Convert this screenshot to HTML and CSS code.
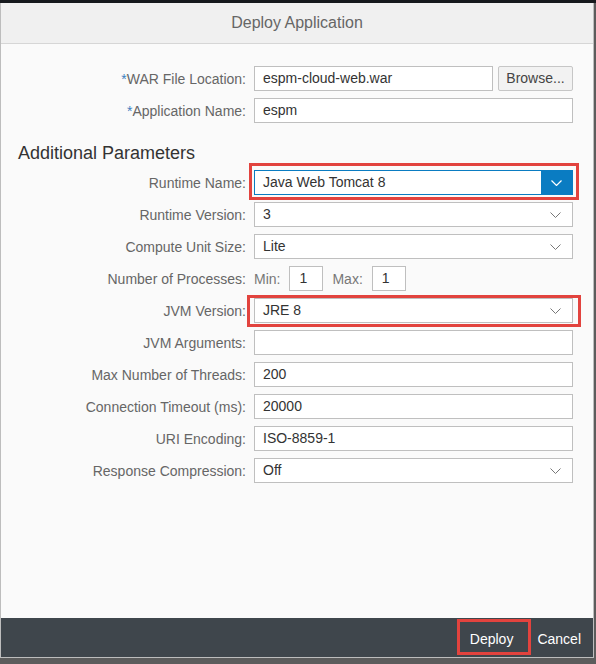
FILE: index.html
```html
<!DOCTYPE html>
<html>
<head>
<meta charset="utf-8">
<link rel="stylesheet" href="styles.css">
</head>
<body>
<div class="topbar"></div>
<div class="dialog">
  <div class="header">Deploy Application</div>
  <div class="content">
    <div class="form form-top">
      <label class="lbl"><span class="req">*</span>WAR File Location:</label>
      <div class="field-file">
        <div class="input">espm-cloud-web.war</div>
        <div class="browse">Browse...</div>
      </div>
      <label class="lbl"><span class="req">*</span>Application Name:</label>
      <div class="input">espm</div>
    </div>
    <h2 class="section">Additional Parameters</h2>
    <div class="form">
      <label class="lbl">Runtime Name:</label>
      <div class="select select-active hl-wrap">
        <span class="val">Java Web Tomcat 8</span>
        <span class="arrow-btn"><svg width="11" height="6" viewBox="0 0 11 6"><polyline points="0.5,0.5 5.5,5.5 10.5,0.5" fill="none" stroke="#fff" stroke-width="1.2"/></svg></span>
        <span class="hl hl-runtime"></span>
      </div>
      <label class="lbl">Runtime Version:</label>
      <div class="select"><span class="val">3</span><svg class="chev" width="11" height="6" viewBox="0 0 11 6"><polyline points="0.5,0.5 5.5,5.5 10.5,0.5" fill="none" stroke="#777" stroke-width="1"/></svg></div>
      <label class="lbl">Compute Unit Size:</label>
      <div class="select"><span class="val">Lite</span><svg class="chev" width="11" height="6" viewBox="0 0 11 6"><polyline points="0.5,0.5 5.5,5.5 10.5,0.5" fill="none" stroke="#777" stroke-width="1"/></svg></div>
      <label class="lbl">Number of Processes:</label>
      <div class="minmax">
        <span class="mm-lbl">Min:</span>
        <div class="input small">1</div>
        <span class="mm-lbl mm-max">Max:</span>
        <div class="input small">1</div>
      </div>
      <label class="lbl">JVM Version:</label>
      <div class="select hl-wrap"><span class="val">JRE 8</span><svg class="chev" width="11" height="6" viewBox="0 0 11 6"><polyline points="0.5,0.5 5.5,5.5 10.5,0.5" fill="none" stroke="#777" stroke-width="1"/></svg><span class="hl hl-jvm"></span></div>
      <label class="lbl">JVM Arguments:</label>
      <div class="input"></div>
      <label class="lbl">Max Number of Threads:</label>
      <div class="input">200</div>
      <label class="lbl">Connection Timeout (ms):</label>
      <div class="input">20000</div>
      <label class="lbl">URI Encoding:</label>
      <div class="input">ISO-8859-1</div>
      <label class="lbl">Response Compression:</label>
      <div class="select"><span class="val">Off</span><svg class="chev" width="11" height="6" viewBox="0 0 11 6"><polyline points="0.5,0.5 5.5,5.5 10.5,0.5" fill="none" stroke="#777" stroke-width="1"/></svg></div>
    </div>
  </div>
  <div class="footer">
    <div class="btn hl-wrap">Deploy<span class="hl hl-deploy"></span></div>
    <div class="btn">Cancel</div>
  </div>
</div>
</body>
</html>
```
FILE: styles.css
```css
html, body {
  margin: 0;
  padding: 0;
}
body {
  background: #5c5c5c;
  font-family: "Liberation Sans", Arial, sans-serif;
  font-size: 14px;
  width: 596px;
  height: 664px;
  overflow: hidden;
}
.topbar {
  height: 3px;
  background: #16191d;
}
.dialog {
  width: 594px;
  height: 655px;
  box-sizing: border-box;
  border: 1px solid #bdbdbd;
  border-top: none;
  display: flex;
  flex-direction: column;
  background: #fafafa;
}
.header {
  height: 40px;
  line-height: 40px;
  background: #f0f0f0;
  border-bottom: 1px solid #d6d6d6;
  text-align: center;
  color: #666;
  font-size: 16px;
}
.content {
  flex: 1;
  background: #fafafa;
  padding: 22px 20px 0 0;
}
.form {
  display: grid;
  grid-template-columns: 245px 1fr;
  column-gap: 8px;
  row-gap: 7px;
  align-items: center;
}
.lbl {
  text-align: right;
  color: #666;
  white-space: nowrap;
}
.req {
  color: #3f7fbf;
}
.input, .select {
  height: 25px;
  box-sizing: border-box;
  border: 1px solid #bfbfbf;
  background: #fff;
  color: #333;
  padding: 0 8px;
  line-height: 23px;
  white-space: nowrap;
}
.field-file {
  display: flex;
  gap: 5px;
}
.field-file .input {
  flex: 1;
}
.browse {
  width: 75px;
  height: 25px;
  box-sizing: border-box;
  border: 1px solid #c6c6c6;
  border-radius: 2px;
  background: #f2f2f2;
  color: #444;
  text-align: center;
  line-height: 23px;
}
.section {
  margin: 19px 0 6px 17px;
  font-size: 18px;
  font-weight: normal;
  line-height: 22px;
  height: 22px;
  color: #333;
}
.select {
  display: flex;
  align-items: center;
  position: relative;
}
.select .val {
  flex: 1;
}
.chev {
  display: block;
  margin-right: 3px;
}
.select-active {
  border-color: #0a7cc2;
  padding-right: 0;
}
.arrow-btn {
  width: 31px;
  align-self: stretch;
  background: #0a7cc2;
  display: flex;
  align-items: center;
  justify-content: center;
}
.arrow-btn svg {
  display: block;
}
.minmax {
  display: flex;
  align-items: center;
  height: 25px;
}
.mm-lbl {
  color: #777;
  margin-right: 9px;
}
.mm-max {
  margin-left: 9px;
}
.input.small {
  width: 34px;
  padding: 0 9px;
}
.hl-wrap {
  position: relative;
}
.hl {
  position: absolute;
  border: 3px solid #e2433e;
  pointer-events: none;
}
.hl-runtime {
  left: -6px;
  right: -7px;
  top: -8px;
  bottom: -6px;
}
.hl-jvm {
  left: -8px;
  right: -9px;
  top: -4px;
  bottom: -5px;
}
.footer {
  height: 39px;
  background: #3f464c;
  display: flex;
  justify-content: flex-end;
  align-items: stretch;
}
.btn {
  color: #fff;
  padding: 2px 12px 0;
  display: flex;
  align-items: center;
}
.hl-deploy {
  left: -1px;
  right: -6px;
  top: 1px;
  bottom: 2px;
}
```
